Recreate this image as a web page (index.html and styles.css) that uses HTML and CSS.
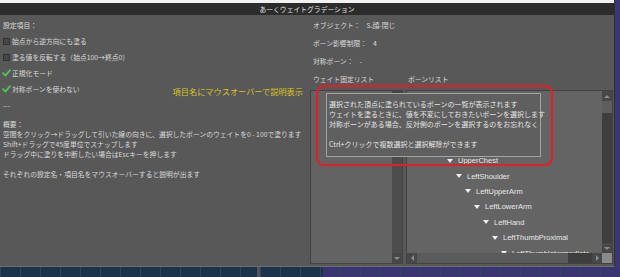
FILE: index.html
```html
<!DOCTYPE html>
<html lang="ja">
  <head>
    <meta charset="UTF-8" />
    <link rel="stylesheet" href="styles.css">
    <title>あーくウェイトグラデーション</title>
  </head>
  <body>
    <div class="screen">
      <div class="window">
        <div class="topline"></div>
        <div class="titlebar">あーくウェイトグラデーション</div>

        <div class="content">
          <div class="settings">
            <div class="line">設定項目：</div>

            <div class="options">
              <div class="check-row">
                <span class="box"></span>
                <span>始点から逆方向にも塗る</span>
              </div>
              <div class="check-row">
                <span class="box"></span>
                <span>塗る値を反転する（始点100→終点0）</span>
              </div>
              <div class="check-row">
                <svg class="tick" viewBox="0 0 9 8" width="9" height="8">
                  <polyline points="1,4.2 3.4,6.6 8,1.2" />
                </svg>
                <span>正規化モード</span>
              </div>
              <div class="check-row">
                <svg class="tick" viewBox="0 0 9 8" width="9" height="8">
                  <polyline points="1,4.2 3.4,6.6 8,1.2" />
                </svg>
                <span>対称ボーンを使わない</span>
                <span class="hint">項目名にマウスオーバーで説明表示</span>
              </div>
            </div>

            <div class="line sep">---</div>

            <div class="summary">
              <div class="line">概要：</div>
              <div class="line">空間をクリック→ドラッグして引いた線の向きに、選択したボーンのウェイトを0 - 100で塗ります</div>
              <div class="line">Shift+ドラッグで45度単位でスナップします</div>
              <div class="line">ドラッグ中に塗りを中断したい場合はEscキーを押します</div>
              <div class="line"></div>
              <div class="line">それぞれの設定名・項目名をマウスオーバーすると説明が出ます</div>
            </div>
          </div>

          <div class="info">
            <div class="field"><span>オブジェクト：</span><span>S.顔-閉じ</span></div>
            <div class="field"><span>ボーン影響制限：</span><span>4</span></div>
            <div class="field"><span>対称ボーン：</span><span>-</span></div>
            <div class="field heads">
              <span class="head-fixed">ウェイト固定リスト</span>
              <span>ボーンリスト</span>
            </div>

            <div class="lists">
              <div class="fixed-list">
                <div class="list-body"></div>
                <div class="vscroll plain">
                  <div class="arrow"><span class="tri up"></span></div>
                  <div class="arrow"><span class="tri down"></span></div>
                </div>
              </div>

              <div class="bone-list">
                <!-- rows above UpperChest sit under the tooltip -->
                <div class="tree">
                  <div class="node l4">UpperChest</div>
                  <div class="node l5">LeftShoulder</div>
                  <div class="node l6">LeftUpperArm</div>
                  <div class="node l7">LeftLowerArm</div>
                  <div class="node l8">LeftHand</div>
                  <div class="node l9">LeftThumbProximal</div>
                  <div class="node l10">LeftThumbIntermediate</div>
                </div>
                <div class="vscroll">
                  <div class="arrow"><span class="tri up"></span></div>
                  <div class="thumb-v"></div>
                  <div class="track"></div>
                  <div class="arrow"><span class="tri down"></span></div>
                </div>
                <div class="hscroll">
                  <div class="arrow"><span class="tri left"></span></div>
                  <div class="thumb-h"></div>
                  <div class="track"></div>
                  <div class="arrow"><span class="tri right"></span></div>
                </div>
                <div class="corner"></div>
              </div>
            </div>

            <div class="tooltip">
              <div>選択された頂点に塗られているボーンの一覧が表示されます</div>
              <div>ウェイトを塗るときに、値を不変にしておきたいボーンを選択します</div>
              <div>対称ボーンがある場合、反対側のボーンを選択するのをお忘れなく</div>
              <div>&nbsp;</div>
              <div>Ctrl+クリックで複数選択と選択解除ができます</div>
            </div>
            <div class="highlight"></div>
          </div>
        </div>
      </div>
      <div class="side"></div>
    </div>
    <div class="floor"></div>
  </body>
</html>
```

FILE: styles.css
```css
* {
  margin: 0;
  padding: 0;
  box-sizing: border-box;
}

body {
  width: 620px;
  height: 277px;
  overflow: hidden;
  background: #39346e;
  font-family: "Noto Sans CJK JP", "Noto Sans", sans-serif;
  font-size: 6.8px;
  color: #d8d8d8;
}

.screen {
  display: flex;
  height: 267px;
}

.window {
  width: 615px;
  display: flex;
  flex-direction: column;
  background: #585858;
  border-right: 1px solid #2e2d3c;
  border-bottom: 1px solid #6e6e6e;
}

.side {
  flex: 1;
  background: #3b3775;
}

.topline {
  flex: none;
  height: 3px;
  background: #f2f2f2;
}

.titlebar {
  flex: none;
  height: 12px;
  line-height: 12px;
  background: #2c2c2c;
  text-align: center;
  color: #e2e2e2;
}

.content {
  flex: 1;
  min-height: 0;
  display: flex;
}

/* left column */
.settings {
  width: 310px;
  padding: 5px 7px 0 3px;
}

.line {
  height: 10px;
  line-height: 10px;
  white-space: nowrap;
}

.options {
  margin-top: 3px;
}

.check-row {
  display: flex;
  align-items: center;
  height: 16px;
  gap: 2px;
  white-space: nowrap;
}

.box {
  width: 7px;
  height: 7px;
  background: #454545;
  border: 1px solid #333;
}

.tick {
  width: 9px;
  height: 8px;
  margin-left: -1px;
  margin-right: -1px;
}

.tick polyline {
  fill: none;
  stroke: #4cc94c;
  stroke-width: 1.8;
  stroke-linecap: round;
  stroke-linejoin: round;
}

.hint {
  margin-left: auto;
  align-self: flex-end;
  line-height: 12px;
  font-size: 8.2px;
  color: #d9c41e;
}

.sep {
  margin-top: 3px;
}

.summary {
  margin-top: 9px;
}

/* right column */
.info {
  flex: 1;
  min-height: 0;
  position: relative;
  display: flex;
  flex-direction: column;
  padding: 1px 1px 2px 0;
}

.field {
  flex: none;
  height: 18px;
  line-height: 18px;
  padding-left: 3px;
  display: flex;
  gap: 6px;
  white-space: nowrap;
}

.heads {
  height: 19px;
  gap: 0;
}

.head-fixed {
  width: 95px;
}

.lists {
  flex: 1;
  min-height: 0;
  display: flex;
  gap: 3px;
  margin-top: 1px;
}

.fixed-list {
  width: 93px;
  display: flex;
  border: 1px solid #424242;
}

.list-body {
  flex: 1;
  background: #636363;
}

.vscroll {
  width: 10px;
  min-height: 0;
  display: flex;
  flex-direction: column;
  background: #3e3e3e;
}

.vscroll.plain {
  background: #4d4d4d;
  justify-content: space-between;
}

.arrow {
  width: 10px;
  height: 10px;
  flex: none;
  display: flex;
  align-items: center;
  justify-content: center;
  background: #474747;
}

.tri {
  width: 0;
  height: 0;
}

.tri.up {
  border-left: 3px solid transparent;
  border-right: 3px solid transparent;
  border-bottom: 3px solid #8c8c8c;
}

.tri.down {
  border-left: 3px solid transparent;
  border-right: 3px solid transparent;
  border-top: 3px solid #8c8c8c;
}

.tri.left {
  border-top: 3px solid transparent;
  border-bottom: 3px solid transparent;
  border-right: 3px solid #8c8c8c;
}

.tri.right {
  border-top: 3px solid transparent;
  border-bottom: 3px solid transparent;
  border-left: 3px solid #8c8c8c;
}

.thumb-v {
  flex: none;
  height: 12px;
  background: #5e5e5e;
}

.track {
  flex: 1;
}

.bone-list {
  width: 207px;
  display: grid;
  grid-template-columns: minmax(0, 1fr) 10px;
  grid-template-rows: minmax(0, 1fr) 10px;
  border: 1px solid #424242;
}

.tree {
  min-height: 0;
  background: #646464;
  overflow: hidden;
  padding-top: 62px;
}

.node {
  height: 15.4px;
  display: flex;
  align-items: center;
  white-space: nowrap;
  font-family: "Liberation Sans", sans-serif;
  font-size: 7.5px;
  color: #e8e8e8;
}

.node::before {
  content: "";
  width: 0;
  height: 0;
  border-left: 3px solid transparent;
  border-right: 3px solid transparent;
  border-top: 4px solid #eeeeee;
  margin-right: 5px;
}

.l4 { padding-left: 40px; }
.l5 { padding-left: 49px; }
.l6 { padding-left: 58px; }
.l7 { padding-left: 67px; }
.l8 { padding-left: 76px; }
.l9 { padding-left: 85px; }
.l10 { padding-left: 94px; }

.hscroll {
  display: flex;
  background: #3e3e3e;
}

.thumb-h {
  width: 151px;
  background: #5b5b5b;
}

.corner {
  background: #8a8a8a;
}

/* overlays */
.tooltip {
  position: absolute;
  left: 16px;
  top: 78px;
  width: 215px;
  height: 64px;
  padding: 5px 2px 0;
  background: #5f5f5f;
  border: 1px solid #a3a3a3;
  font-size: 7px;
  line-height: 10px;
  color: #e4e4e4;
  white-space: nowrap;
}

.highlight {
  position: absolute;
  left: 6px;
  top: 70px;
  width: 237px;
  height: 81px;
  border: 2px solid #e41e26;
  border-radius: 8px;
}

.floor {
  height: 10px;
  background:
    linear-gradient(90deg, transparent 257px, #555 257px, #555 260px, transparent 260px),
    repeating-linear-gradient(90deg, #2b4762 0, #2b4762 1px, transparent 1px, transparent 20px),
    linear-gradient(90deg, #1c344b 0, #1c344b 323px, #3a3470 323px);
}
```
